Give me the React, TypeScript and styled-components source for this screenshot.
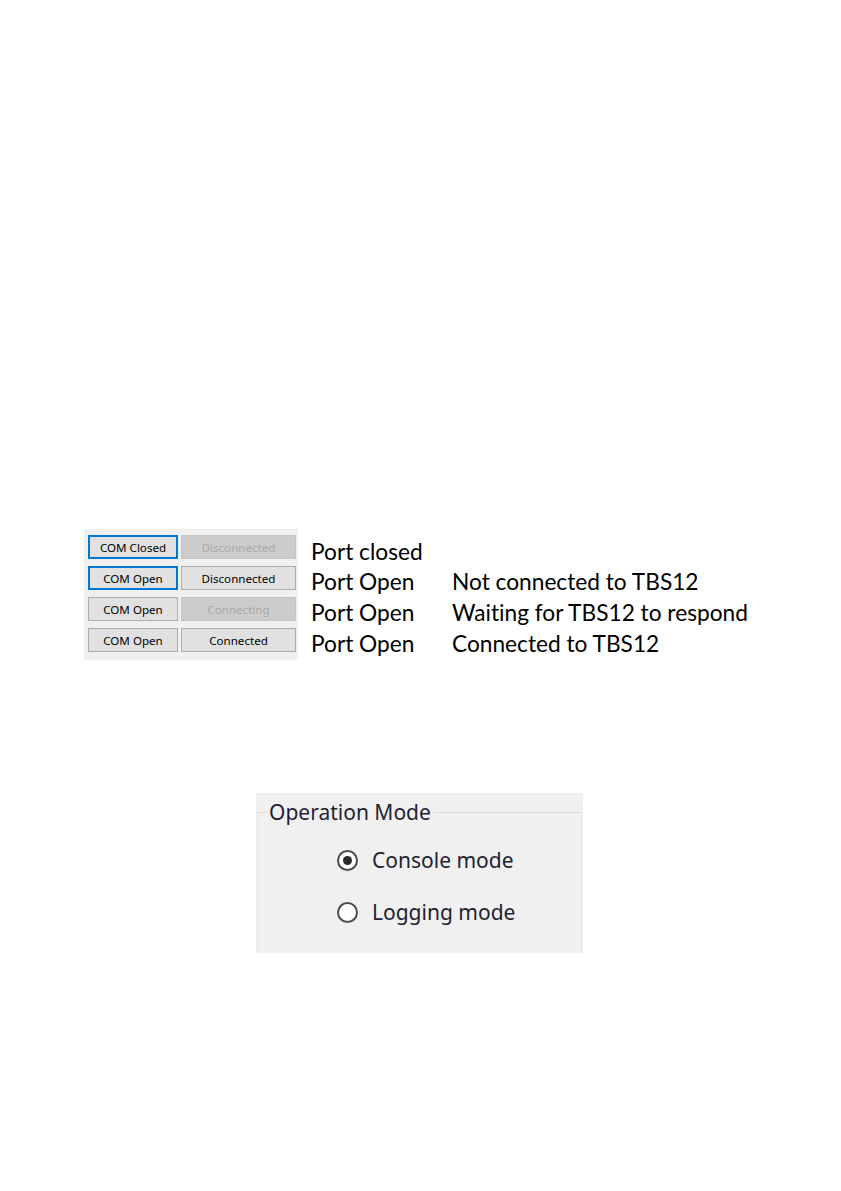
import styled, {createGlobalStyle} from 'styled-components'

const GlobalStyle = createGlobalStyle`
    body {
        margin: 0;
        background: #fff;
    }
`

type ButtonState = 'focused' | 'normal' | 'disabled'

interface ButtonProps {
    $state: ButtonState
    $wide?: boolean
}

const rows: {com: string; comState: ButtonState; link: string; linkState: ButtonState; port: string; note: string}[] = [
    {com: 'COM Closed', comState: 'focused', link: 'Disconnected', linkState: 'disabled', port: 'Port closed', note: ''},
    {com: 'COM Open', comState: 'focused', link: 'Disconnected', linkState: 'normal', port: 'Port Open', note: 'Not connected to TBS12'},
    {com: 'COM Open', comState: 'normal', link: 'Connecting', linkState: 'disabled', port: 'Port Open', note: 'Waiting for TBS12 to respond'},
    {com: 'COM Open', comState: 'normal', link: 'Connected', linkState: 'normal', port: 'Port Open', note: 'Connected to TBS12'},
]

const App = () => {
    return (
        <Page>
            <GlobalStyle />
            <Figure>
                <ButtonPanel>
                    {rows.map((r, i) => (
                        <ButtonRow key={i}>
                            <WinButton $state={r.comState}>{r.com}</WinButton>
                            <WinButton $state={r.linkState} $wide>
                                {r.link}
                            </WinButton>
                        </ButtonRow>
                    ))}
                </ButtonPanel>
                <Legend>
                    {rows.map((r, i) => (
                        <LegendLine key={i}>
                            <span>{r.port}</span>
                            <span>{r.note}</span>
                        </LegendLine>
                    ))}
                </Legend>
            </Figure>

            <GroupPanel>
                <GroupBox>
                    <GroupTitle>Operation Mode</GroupTitle>
                    <RadioList>
                        <RadioRow>
                            <RadioCircle $checked />
                            Console mode
                        </RadioRow>
                        <RadioRow>
                            <RadioCircle />
                            Logging mode
                        </RadioRow>
                    </RadioList>
                </GroupBox>
            </GroupPanel>
        </Page>
    )
}

const Page = styled.div`
    padding-top: 529px;
    display: flex;
    flex-direction: column;
    align-items: flex-start;
`

const Figure = styled.div`
    margin-left: 84px;
    display: flex;
    align-items: flex-start;
    gap: 13px;
`

const ButtonPanel = styled.div`
    width: 214px;
    height: 131px;
    box-sizing: border-box;
    padding: 6px 0 0 4px;
    background: #f0f0f0;
    display: flex;
    flex-direction: column;
    gap: 7px;
`

const ButtonRow = styled.div`
    display: flex;
    gap: 3px;
`

const WinButton = styled.div<ButtonProps>`
    width: ${(p) => (p.$wide ? '115px' : '90px')};
    height: 24px;
    box-sizing: border-box;
    display: flex;
    align-items: center;
    justify-content: center;
    font-family: 'Noto Sans', sans-serif;
    font-size: 11.6px;
    background: ${(p) => (p.$state === 'disabled' ? '#cccccc' : '#e1e1e1')};
    color: ${(p) => (p.$state === 'disabled' ? '#a8a8a8' : '#000')};
    border: ${(p) => {
        if (p.$state === 'focused') return '2px solid #0078d7'
        if (p.$state === 'disabled') return '1px solid #c4c4c4'
        return '1px solid #adadad'
    }};
`

const Legend = styled.div`
    margin-top: 7px;
    display: flex;
    flex-direction: column;
`

const LegendLine = styled.div`
    display: grid;
    grid-template-columns: 141px auto;
    height: 30.6px;
    align-items: center;
    font-family: Lato, 'Open Sans', sans-serif;
    font-size: 22.7px;
    font-variant-ligatures: none;
    color: #000;
    white-space: nowrap;
`

const GroupPanel = styled.div`
    margin: 133px 0 0 256px;
    width: 327px;
    height: 160px;
    box-sizing: border-box;
    padding-top: 7px;
    background: #f0f0f0;
    display: flex;
`

const GroupBox = styled.fieldset`
    flex: 1;
    margin: 0 1px 0 1px;
    padding: 0 0 0 9px;
    border: 1px solid #e8e8e8;
    border-top-color: #dcdcdc;
    border-bottom: none;
    min-width: 0;
`

const GroupTitle = styled.legend`
    padding: 0 2px;
    font-family: 'Noto Sans', sans-serif;
    font-size: 21px;
    line-height: 24px;
    color: #1f1f33;
`

const RadioList = styled.div`
    margin: 23px 0 0 70px;
    display: flex;
    flex-direction: column;
    gap: 26px;
`

const RadioRow = styled.div`
    display: flex;
    align-items: center;
    gap: 14px;
    height: 26px;
    font-family: 'Noto Sans', sans-serif;
    font-size: 21px;
    color: #222230;
`

const RadioCircle = styled.span<{$checked?: boolean}>`
    width: 21px;
    height: 21px;
    box-sizing: border-box;
    border-radius: 50%;
    border: 2px solid #4a4a4a;
    background: #fff;
    display: flex;
    align-items: center;
    justify-content: center;

    &::after {
        content: '';
        width: 9px;
        height: 9px;
        border-radius: 50%;
        background: ${(p) => (p.$checked ? '#2a2a2a' : 'transparent')};
    }
`

export default App
